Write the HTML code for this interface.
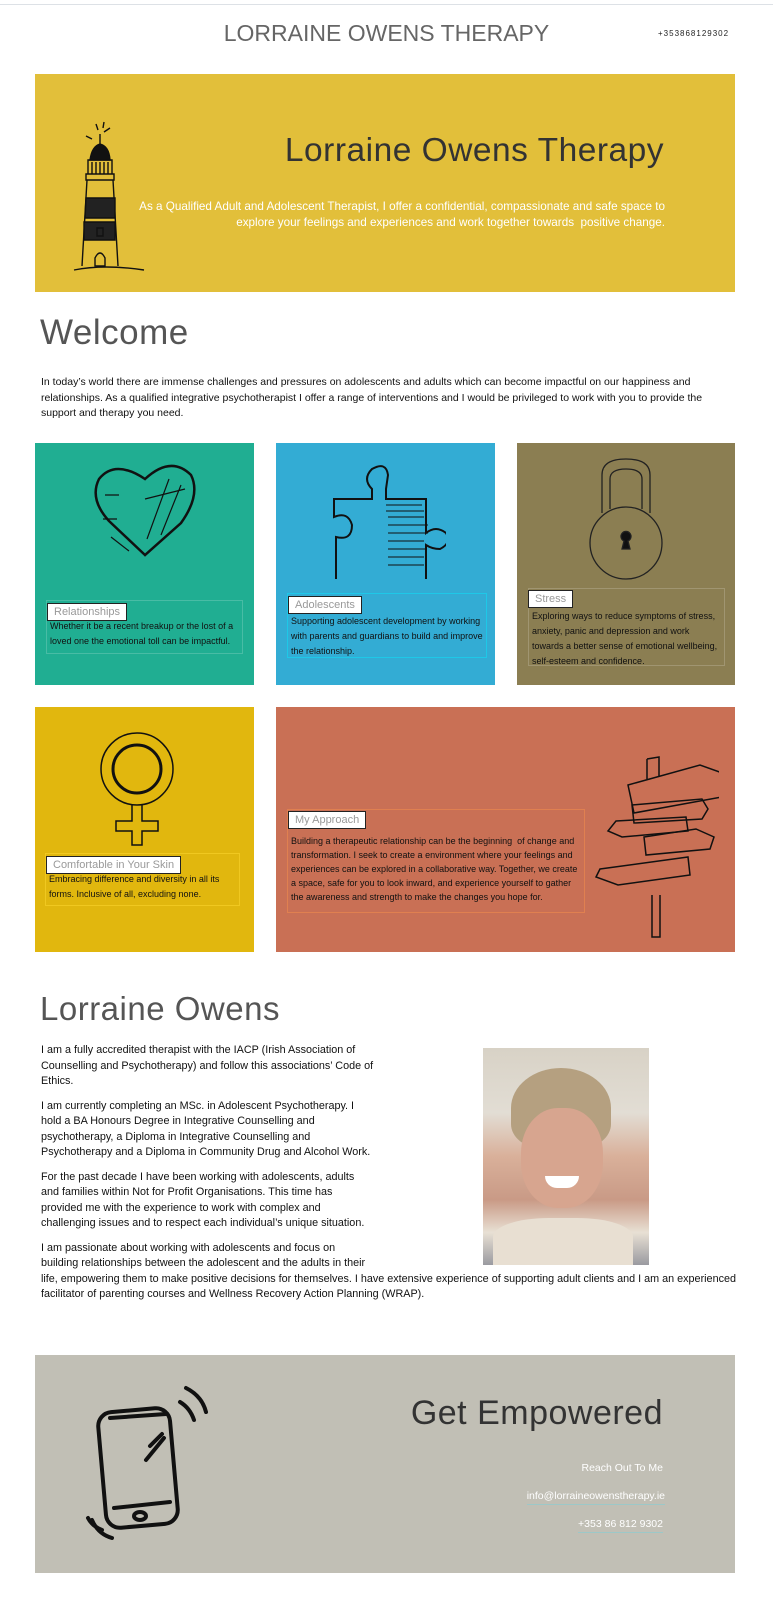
<!DOCTYPE html>
<html><head><meta charset="utf-8"><style>
*{margin:0;padding:0;box-sizing:border-box}
body{width:773px;height:1600px;position:relative;background:#fff;font-family:"Liberation Sans",sans-serif;color:#222;overflow:hidden}
.a{position:absolute}
.thin{font-weight:300;color:#444;letter-spacing:0.5px}
.card .lbl{position:absolute;background:#fff;border:1.5px solid #222;color:#999;font-size:11px;padding:1px 6px;white-space:nowrap;line-height:14px}
.card .box{position:absolute;border:1px solid rgba(255,255,255,0.18);font-size:9px;line-height:15px;color:#111;padding:0 3px}
p{margin-bottom:9px}
</style></head><body>
<div class="a" style="left:0;top:4px;width:773px;height:1px;background:#dde1e6"></div>
<div class="a thin" style="left:0;width:773px;top:20px;text-align:center;font-size:23px;color:#666;letter-spacing:0">LORRAINE OWENS THERAPY</div>
<div class="a" style="left:658px;top:29px;font-size:8px;letter-spacing:1px;color:#222">+353868129302</div>

<div class="a" style="left:35px;top:74px;width:700px;height:218px;background:#e2bf3a"></div>
<svg class="a" style="left:70px;top:118px" width="80" height="160" viewBox="0 0 80 160" fill="none" stroke="#111" stroke-width="1.4">
<path d="M30 16v10M26 6l2 6M34 4l-1 6M40 10l-6 4M16 18l6 3"/>
<path d="M20 42q2-14 10-16q9 2 10 16z" fill="#111"/>
<path d="M18 42h24v14H18zM16 56h28v6H16z"/><path d="M22 44v12M26 44v12M30 44v12M34 44v12M38 44v12"/>
<path d="M17 62L12 148M43 62L48 148"/>
<path d="M16 80h29v20H15z" fill="#222"/><path d="M14 122h31v-18H14z" fill="#222"/>
<path d="M25 140q5-10 10 0v8H25z"/><path d="M27 110h6v8h-6z"/>
<path d="M4 152q30-6 70 0"/></svg>
<div class="a thin" style="right:109px;top:132px;font-size:33.5px;color:#333">Lorraine Owens Therapy</div>
<div class="a" style="right:108px;top:199px;width:620px;text-align:right;font-size:11.7px;line-height:16px;color:#fff">As a Qualified Adult and Adolescent Therapist, I offer a confidential, compassionate and safe space to<br>explore your feelings and experiences and work together towards&nbsp; positive change.</div>

<div class="a thin" style="left:40px;top:313px;font-size:35px;color:#555">Welcome</div>
<div class="a" style="left:41px;top:375px;width:684px;font-size:10.5px;line-height:15.5px;color:#111">In today’s world there are immense challenges and pressures on adolescents and adults which can become impactful on our happiness and relationships. As a qualified integrative psychotherapist I offer a range of interventions and I would be privileged to work with you to provide the support and therapy you need.</div>

<!-- Row 1 -->
<div class="a card" style="left:35px;top:443px;width:219px;height:242px;background:#20ae92">
<svg class="a" style="left:50px;top:16px" width="120" height="110" viewBox="0 0 120 110" fill="none" stroke="#111" stroke-width="2.5"><path d="M60 96L24 62Q4 40 14 20Q30 0 60 20Q86 -4 106 16Q116 36 96 64Z"/><path d="M20 36h14M18 60h14M26 78l18 14M84 20l-22 60M96 26l-20 50M60 40l40-10" stroke-width="1.2"/></svg>
<div class="box" style="left:11px;top:157px;width:197px;height:54px;padding-top:18px">Whether it be a recent breakup or the lost of a loved one the emotional toll can be impactful.</div>
<div class="lbl" style="left:12px;top:160px">Relationships</div>
</div>
<div class="a card" style="left:276px;top:443px;width:219px;height:242px;background:#33acd4">
<svg class="a" style="left:50px;top:16px" width="120" height="120" viewBox="0 0 120 120" fill="none" stroke="#111" stroke-width="2"><path d="M8 40h38v-10q-10-10 0-20q14-8 16 6l-2 14v10h40v34q10-8 20 0q6 10-6 16q-8 0-14-4v38H10V78q16 4 16-12q-4-14-18-8z"/><path d="M60 46h36M60 52h38M62 58h36M62 66h40M62 74h40M62 82h36M62 90h38M62 98h36M62 106h36" stroke-width="1"/></svg>
<div class="box" style="left:11px;top:150px;width:200px;height:65px;padding-top:20px;border-color:#1ec8e8">Supporting adolescent development by working with parents and guardians to build and improve the relationship.</div>
<div class="lbl" style="left:12px;top:153px">Adolescents</div>
</div>
<div class="a card" style="left:517px;top:443px;width:218px;height:242px;background:#8b7e52">
<svg class="a" style="left:55px;top:10px" width="110" height="130" viewBox="0 0 110 130" fill="none" stroke="#222" stroke-width="1.3"><path d="M30 60V22q0-16 24-16q24 0 24 16v38M38 56V26q0-10 16-10q16 0 16 10v30"/><circle cx="54" cy="90" r="36"/><path d="M50 96l2-8a5 5 0 1 1 4 0l2 8z" fill="#111"/></svg>
<div class="box" style="left:11px;top:145px;width:197px;height:78px;padding-top:20px">Exploring ways to reduce symptoms of stress, anxiety, panic and depression and work towards a better sense of emotional wellbeing, self-esteem and confidence.</div>
<div class="lbl" style="left:11px;top:147px">Stress</div>
</div>

<!-- Row 2 -->
<div class="a card" style="left:35px;top:707px;width:219px;height:245px;background:#e1b70e">
<svg class="a" style="left:65px;top:25px" width="90" height="120" viewBox="0 0 90 120" fill="none" stroke="#111" stroke-width="1.5"><circle cx="37" cy="37" r="36"/><circle cx="37" cy="37" r="24" stroke-width="3"/><path d="M32 73v16H16v10h16v14h10V99h16V89H42V73"/></svg>
<div class="box" style="left:10px;top:146px;width:195px;height:53px;padding-top:18px;border-color:#f0c820">Embracing difference and diversity in all its forms. Inclusive of all, excluding none.</div>
<div class="lbl" style="left:11px;top:149px">Comfortable in Your Skin</div>
</div>
<div class="a card" style="left:276px;top:707px;width:459px;height:245px;background:#c97055">
<svg class="a" style="left:318px;top:48px" width="125" height="185" viewBox="0 0 125 185" fill="none" stroke="#111" stroke-width="1.5"><path d="M53 4l12-2v20M53 4v20M58 140v42h8v-42"/><path d="M34 30l72-20l28 10l-6 22l-88 16z"/><path d="M38 50l70-6l6 10l-6 10l-68 4z"/><path d="M22 66l70-4l2 14l-66 6l-14-6z"/><path d="M50 82l52-8l18 8l-4 12l-64 6z"/><path d="M6 114l88-12l2 18l-72 10l-22-8z"/></svg>
<div class="box" style="left:11px;top:102px;width:298px;height:104px;padding-top:24px;line-height:14px;border-color:#e08050">Building a therapeutic relationship can be the beginning&nbsp; of change and transformation. I seek to create a environment where your feelings and experiences can be explored in a collaborative way. Together, we create a space, safe for you to look inward, and experience yourself to gather the awareness and strength to make the changes you hope for.</div>
<div class="lbl" style="left:12px;top:104px">My Approach</div>
</div>

<div class="a thin" style="left:40px;top:990px;font-size:33px;color:#555">Lorraine Owens</div>
<div class="a" style="left:483px;top:1048px;width:166px;height:217px;background:linear-gradient(180deg,#d8d2c6 0%,#e2ddd4 30%,#d9b09a 50%,#c99a86 70%,#e8e0d4 85%,#9a9aa0 100%)">
<div class="a" style="left:28px;top:20px;width:100px;height:80px;border-radius:50% 50% 30% 30%;background:#b5a080"></div>
<div class="a" style="left:38px;top:60px;width:82px;height:100px;border-radius:45%;background:#d7a58f"></div>
<div class="a" style="left:62px;top:128px;width:34px;height:12px;border-radius:0 0 20px 20px;background:#fff"></div>
<div class="a" style="left:10px;top:170px;width:140px;height:47px;border-radius:40% 40% 0 0;background:#e8dfd2"></div>
</div>
<div class="a" style="left:41px;top:1043px;width:700px;font-size:10.8px;line-height:15.5px;color:#111">
<div style="float:right;width:366px;height:222px"></div>
<p>I am a fully accredited therapist with the IACP (Irish Association of Counselling and Psychotherapy) and follow this associations’ Code of Ethics.</p>
<p>I am currently completing an MSc. in Adolescent Psychotherapy. I hold a BA Honours Degree in Integrative Counselling and psychotherapy, a Diploma in Integrative Counselling and Psychotherapy and a Diploma in Community Drug and Alcohol Work.</p>
<p>For the past decade I have been working with adolescents, adults and families within Not for Profit Organisations. This time has provided me with the experience to work with complex and challenging issues and to respect each individual’s unique situation.</p>
<p>I am passionate about working with adolescents and focus on building relationships between the adolescent and the adults in their life, empowering them to make positive decisions for themselves. I have extensive experience of supporting adult clients and I am an experienced facilitator of parenting courses and Wellness Recovery Action Planning (WRAP).</p>
</div>

<div class="a" style="left:35px;top:1355px;width:700px;height:218px;background:#c1bfb5"></div>
<svg class="a" style="left:72px;top:1384px" width="140" height="160" viewBox="0 0 140 160" fill="none" stroke="#111" stroke-width="4" stroke-linecap="round"><rect x="30" y="26" width="72" height="116" rx="14" transform="rotate(-5 66 84)"/><path d="M38 34l56-4M42 124l56-6M78 62l12-12M74 76l18-22"/><ellipse cx="68" cy="132" rx="6" ry="4"/><path d="M108 18q10 6 14 18M114 4q16 8 20 24M30 146q-10-4-14-12M40 154q-14-4-20-18"/></svg>
<div class="a thin" style="right:110px;top:1394px;font-size:34px;color:#333">Get Empowered</div>
<div class="a" style="right:110px;top:1462px;font-size:10.5px;color:#fff">Reach Out To Me</div>
<div class="a" style="right:108px;top:1490px;font-size:10.5px;color:#fff;border-bottom:1px solid #9cc8c8;padding-bottom:2px">info@lorraineowenstherapy.ie</div>
<div class="a" style="right:110px;top:1518px;font-size:10.5px;color:#fff;border-bottom:1px solid #9cc8c8;padding-bottom:2px">+353 86 812 9302</div>
</body></html>
